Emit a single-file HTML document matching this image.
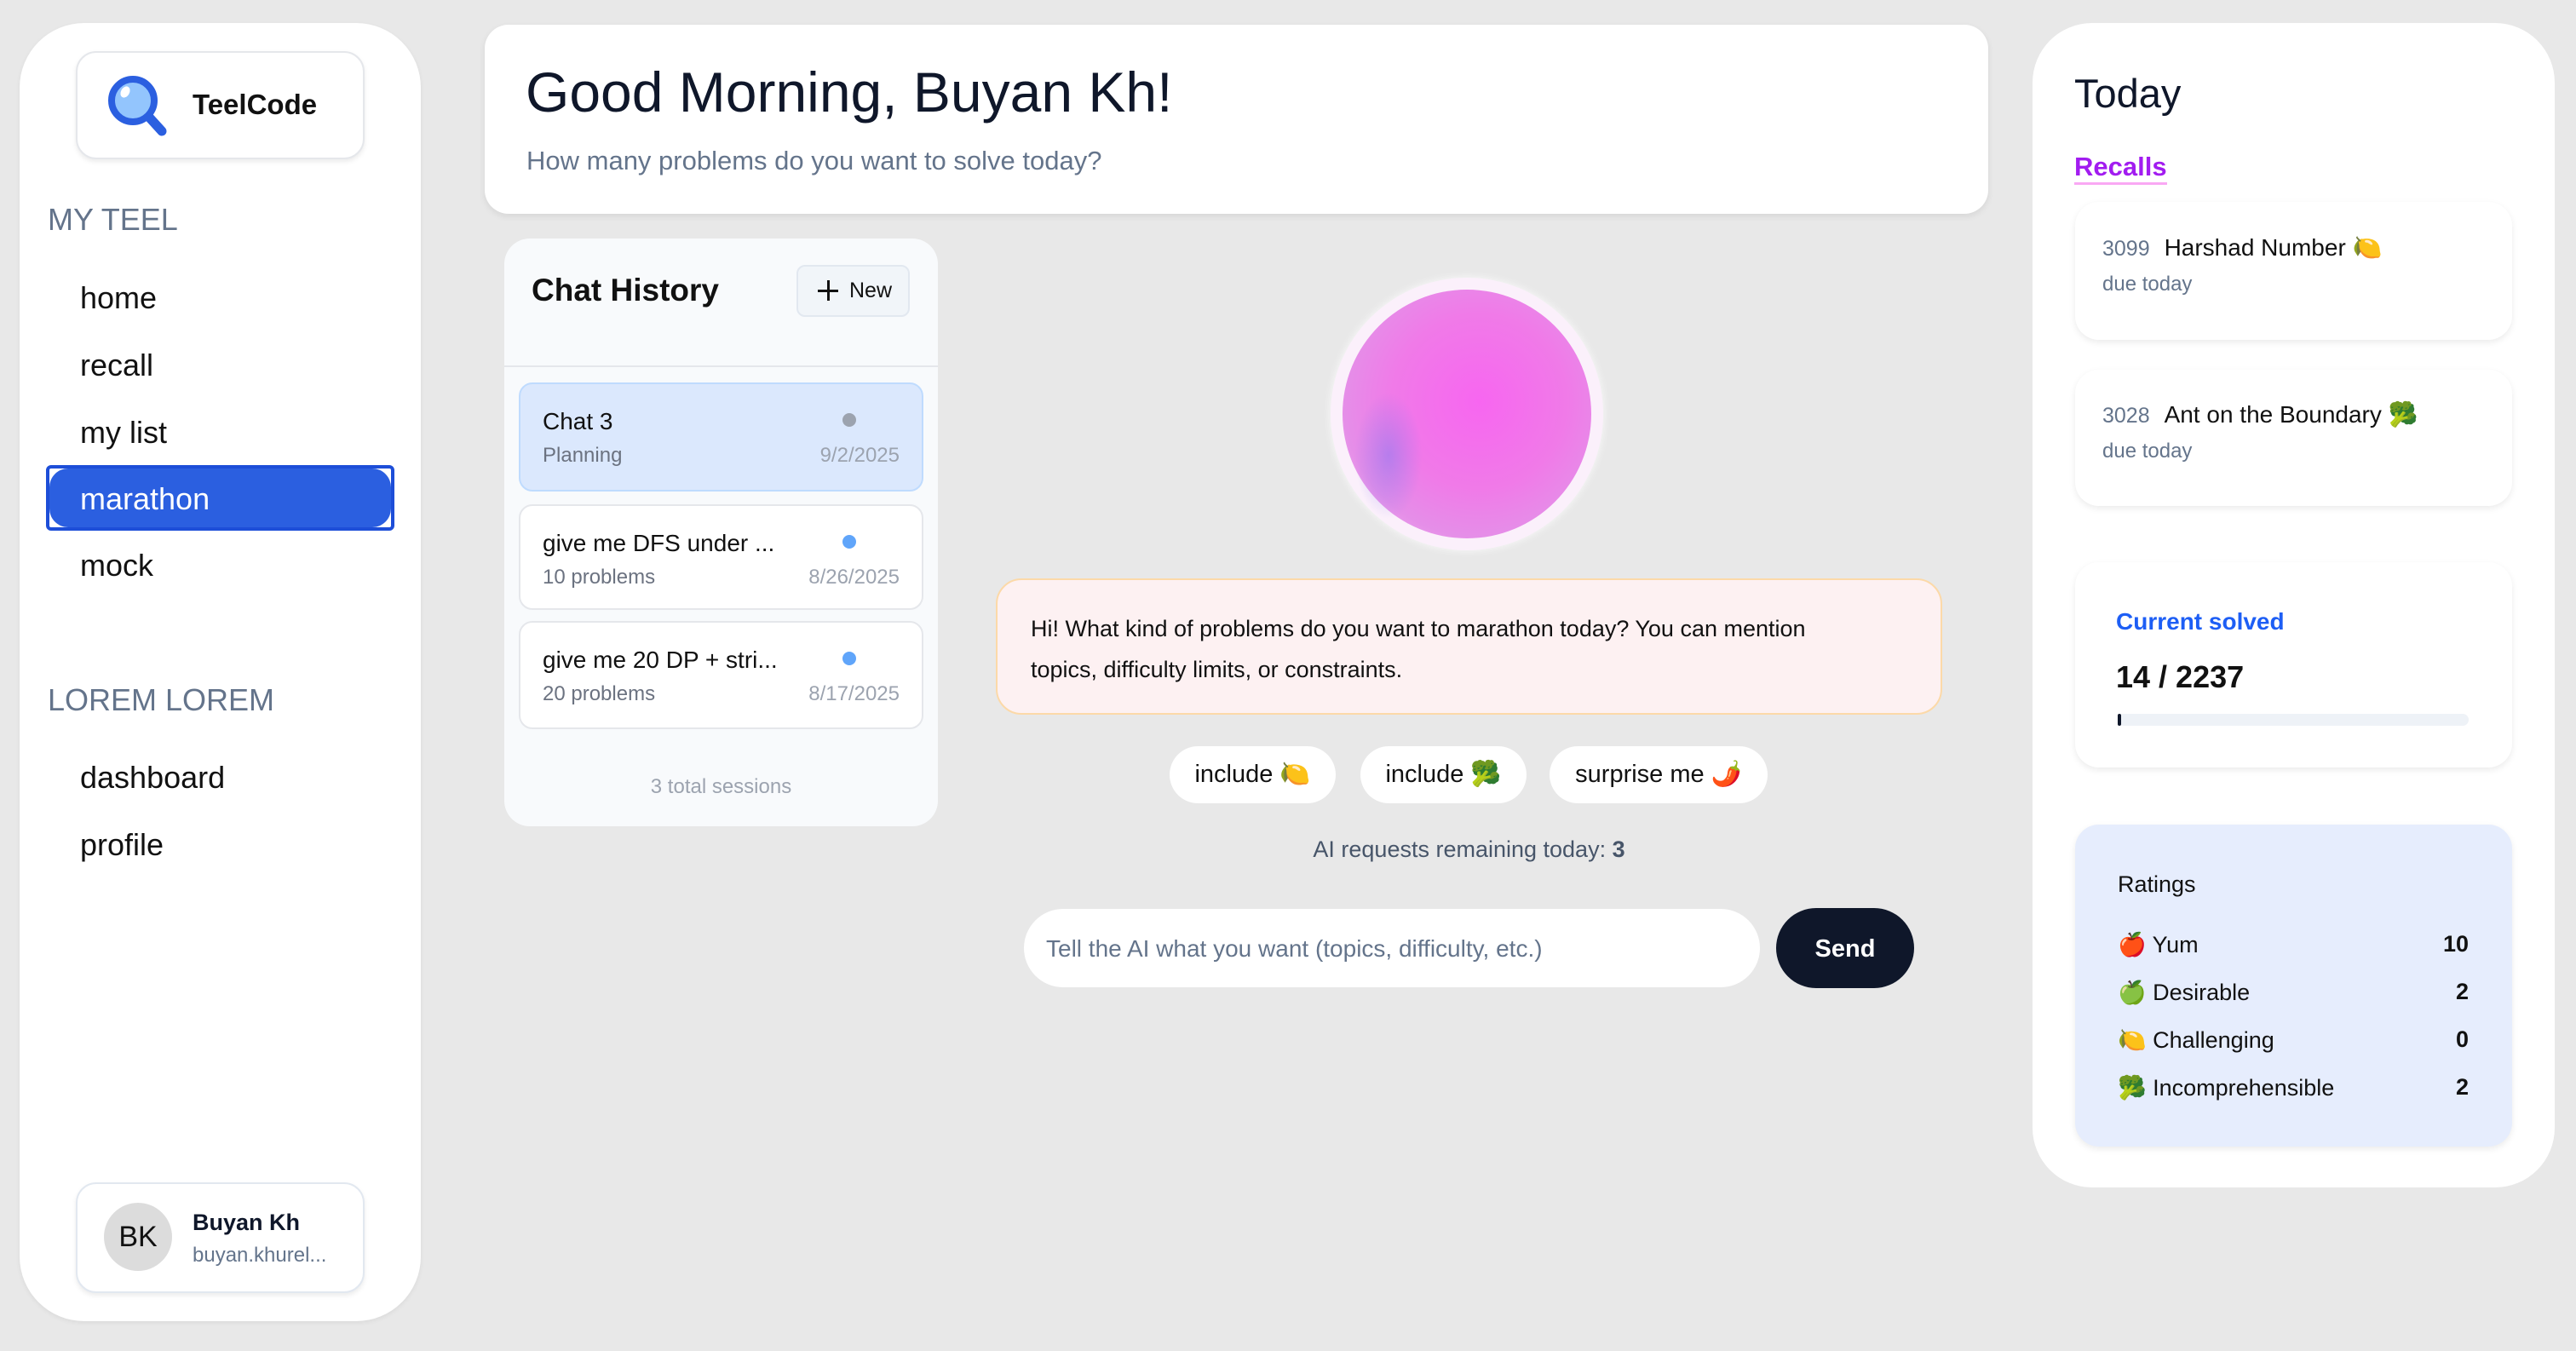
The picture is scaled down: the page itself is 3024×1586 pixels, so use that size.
<!DOCTYPE html>
<html><head><meta charset="utf-8">
<style>
*{box-sizing:border-box;margin:0;padding:0}
body{width:3024px;height:1586px;background:#e8e8e8;font-family:"Liberation Sans","Noto Sans CJK SC",sans-serif;position:relative;overflow:hidden;color:#0f172a}
.a{position:absolute}
.card{position:absolute;background:#fff}
.nav{position:absolute;left:94px;font-size:36px;color:#111}
.sec{position:absolute;left:56px;font-size:36px;color:#64748b}
.item{position:absolute;left:609px;width:475px;background:#fff;border:2px solid #e5e7eb;border-radius:16px}
.item .t{position:absolute;left:26px;top:28px;font-size:28px;color:#111}
.item .s{position:absolute;left:26px;top:70px;font-size:24px;color:#6b7280}
.item .d{position:absolute;right:26px;top:70px;font-size:24px;color:#9ca3af}
.item .dot{position:absolute;left:378px;top:34px;width:16px;height:16px;border-radius:50%;background:#3b82f6}
.chip{position:absolute;top:876px;height:67px;background:#fff;border-radius:34px;font-size:29px;line-height:67px;text-align:center;color:#111}
.rc{position:absolute;left:2436px;width:513px;background:#fff;border-radius:28px;box-shadow:0 3px 8px rgba(0,0,0,.08)}
.rr{position:absolute;left:2486px;width:412px;font-size:27px;color:#111}
.rr span{position:absolute;right:0;font-weight:bold}
</style></head><body>

<div class="card" style="left:23px;top:27px;width:471px;height:1524px;border-radius:76px;box-shadow:0 2px 6px rgba(0,0,0,.06)"></div>
<div class="card" style="left:89px;top:60px;width:339px;height:127px;border-radius:24px;border:2px solid #e5e7eb;box-shadow:0 3px 6px rgba(0,0,0,.08)"></div>
<svg class="a" style="left:124px;top:86px" width="76" height="76" viewBox="0 0 76 76">
<line x1="46" y1="46" x2="66" y2="68" stroke="#2b5fe0" stroke-width="11" stroke-linecap="round"/>
<circle cx="32" cy="32" r="25" fill="#93c5fd" stroke="#2b5fe0" stroke-width="8"/>
<ellipse cx="23" cy="22" rx="5" ry="7" fill="#fff" transform="rotate(30 23 22)"/>
</svg>
<div class="a" style="left:226px;top:104px;font-size:33px;font-weight:bold;color:#111">TeelCode</div>
<div class="sec" style="top:237px">MY TEEL</div>
<div class="nav" style="top:329px">home</div>
<div class="nav" style="top:408px">recall</div>
<div class="nav" style="top:487px">my list</div>
<div class="a" style="left:54px;top:546px;width:409px;height:77px;border:4px solid #1d4ed8;border-radius:6px;background:#fff"></div>
<div class="a" style="left:58px;top:550px;width:401px;height:69px;background:#2b5fe0;border-radius:22px"></div>
<div class="nav" style="top:565px;color:#fff">marathon</div>
<div class="nav" style="top:643px">mock</div>
<div class="sec" style="top:801px">LOREM LOREM</div>
<div class="nav" style="top:892px">dashboard</div>
<div class="nav" style="top:971px">profile</div>
<div class="card" style="left:89px;top:1388px;width:339px;height:130px;border-radius:24px;border:2px solid #e2e8f0;box-shadow:0 3px 6px rgba(0,0,0,.08)"></div>
<div class="a" style="left:122px;top:1412px;width:80px;height:80px;border-radius:50%;background:#dcdcdc;font-size:34px;line-height:80px;text-align:center;color:#111">BK</div>
<div class="a" style="left:226px;top:1420px;font-size:27px;font-weight:bold;color:#0f172a">Buyan Kh</div>
<div class="a" style="left:226px;top:1460px;font-size:24px;color:#64748b">buyan.khurel...</div>

<div class="card" style="left:569px;top:29px;width:1765px;height:222px;border-radius:28px;box-shadow:0 3px 8px rgba(0,0,0,.08)"></div>
<div class="a" style="left:617px;top:70px;font-size:66px;color:#0f172a">Good Morning, Buyan Kh!</div>
<div class="a" style="left:618px;top:171px;font-size:31px;color:#64748b">How many problems do you want to solve today?</div>

<div class="a" style="left:592px;top:280px;width:509px;height:690px;background:#f8fafc;border-radius:30px"></div>
<div class="a" style="left:624px;top:320px;font-size:37px;font-weight:bold;color:#111">Chat History</div>
<div class="a" style="left:935px;top:311px;width:133px;height:61px;border:2px solid #e2e8f0;border-radius:10px;background:#f1f5f9;font-size:25px;line-height:57px;color:#111;padding-left:60px">New</div>
<div class="a" style="left:960px;top:340px;width:24px;height:3px;background:#111"></div>
<div class="a" style="left:971px;top:329px;width:3px;height:24px;background:#111"></div>
<div class="a" style="left:592px;top:429px;width:509px;height:2px;background:#e5e7eb"></div>
<div class="item" style="top:449px;height:128px;background:#dbe8fd;border-color:#bfdbfe"><div class="t">Chat 3</div><div class="dot" style="background:#9ca3af"></div><div class="s">Planning</div><div class="d">9/2/2025</div></div>
<div class="item" style="top:592px;height:124px"><div class="t">give me DFS under ...</div><div class="dot" style="background:#60a5fa"></div><div class="s">10 problems</div><div class="d">8/26/2025</div></div>
<div class="item" style="top:729px;height:127px"><div class="t">give me 20 DP + stri...</div><div class="dot" style="background:#60a5fa"></div><div class="s">20 problems</div><div class="d">8/17/2025</div></div>
<div class="a" style="left:592px;top:910px;width:509px;text-align:center;font-size:24px;color:#9ca3af">3 total sessions</div>

<div class="a" style="left:1562px;top:326px;width:320px;height:320px;border-radius:50%;background:#fbf0fb;box-shadow:0 0 10px rgba(255,255,255,.8)"></div>
<div class="a" style="left:1576px;top:340px;width:292px;height:292px;border-radius:50%;background:radial-gradient(circle at 55% 45%,#f766f0 0%,#f07ae8 45%,#e58ee8 70%,#f3c6f3 100%)"></div>
<div class="a" style="left:1590px;top:460px;width:80px;height:150px;border-radius:50%;background:radial-gradient(ellipse,rgba(130,120,240,.5),rgba(130,120,240,0) 70%)"></div>

<div class="a" style="left:1169px;top:679px;width:1111px;height:160px;background:#fdf1f2;border:2px solid #fcd9a8;border-radius:30px"></div>
<div class="a" style="left:1210px;top:714px;width:960px;font-size:27px;line-height:48px;color:#111">Hi! What kind of problems do you want to marathon today? You can mention topics, difficulty limits, or constraints.</div>

<div class="chip" style="left:1373px;width:195px">include 🍋</div>
<div class="chip" style="left:1597px;width:195px">include 🥦</div>
<div class="chip" style="left:1819px;width:256px">surprise me 🌶️</div>
<div class="a" style="left:1169px;top:982px;width:1111px;text-align:center;font-size:27px;color:#475569">AI requests remaining today: <b>3</b></div>

<div class="a" style="left:1202px;top:1067px;width:864px;height:92px;background:#fff;border-radius:46px;font-size:28px;line-height:94px;padding-left:26px;color:#64748b">Tell the AI what you want (topics, difficulty, etc.)</div>
<div class="a" style="left:2085px;top:1066px;width:162px;height:94px;background:#0f172a;border-radius:47px;font-size:29px;line-height:96px;text-align:center;color:#fff;font-weight:bold">Send</div>

<div class="card" style="left:2386px;top:27px;width:613px;height:1367px;border-radius:70px"></div>
<div class="a" style="left:2435px;top:82px;font-size:47px;color:#0f172a">Today</div>
<div class="a" style="left:2435px;top:178px;font-size:31px;font-weight:bold;color:#a21cf0;border-bottom:3px solid #f9a8f4;line-height:36px">Recalls</div>
<div class="rc" style="top:237px;height:162px"></div>
<div class="a" style="left:2468px;top:274px;font-size:25px;color:#64748b">3099 <span style="color:#111;font-size:28px;margin-left:10px">Harshad Number 🍋</span></div>
<div class="a" style="left:2468px;top:320px;font-size:24px;color:#64748b">due today</div>
<div class="rc" style="top:434px;height:160px"></div>
<div class="a" style="left:2468px;top:470px;font-size:25px;color:#64748b">3028 <span style="color:#111;font-size:28px;margin-left:10px">Ant on the Boundary 🥦</span></div>
<div class="a" style="left:2468px;top:516px;font-size:24px;color:#64748b">due today</div>
<div class="rc" style="top:660px;height:241px"></div>
<div class="a" style="left:2484px;top:714px;font-size:28px;font-weight:bold;color:#1d5ef5">Current solved</div>
<div class="a" style="left:2484px;top:774px;font-size:36px;font-weight:bold;color:#111">14 / 2237</div>
<div class="a" style="left:2486px;top:838px;width:412px;height:14px;background:#eef2f7;border-radius:7px"></div>
<div class="a" style="left:2486px;top:838px;width:4px;height:14px;background:#0f172a;border-radius:2px"></div>
<div class="rc" style="top:968px;height:378px;background:#e6edfd"></div>
<div class="a" style="left:2486px;top:1023px;font-size:27px;color:#111">Ratings</div>
<div class="rr" style="top:1093px">🍎 Yum<span>10</span></div>
<div class="rr" style="top:1149px">🍏 Desirable<span>2</span></div>
<div class="rr" style="top:1205px">🍋 Challenging<span>0</span></div>
<div class="rr" style="top:1261px">🥦 Incomprehensible<span>2</span></div>
</body></html>
